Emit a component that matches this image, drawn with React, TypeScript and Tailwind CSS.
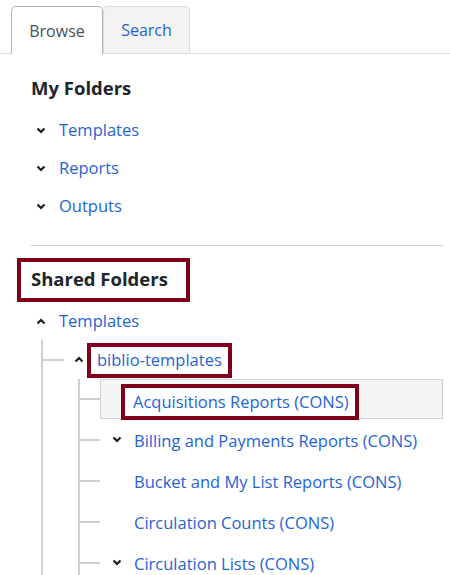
import React from "react";

const font = { fontFamily: '"Open Sans", "Noto Sans", sans-serif' };

function ChevronDown() {
  return (
    <svg width="10" height="7" viewBox="0 0 10 7" className="shrink-0">
      <polyline points="1.5,1.5 5,5 8.5,1.5" fill="none" stroke="#1a1a1a" strokeWidth="2.2" />
    </svg>
  );
}

function ChevronUp() {
  return (
    <svg width="10" height="7" viewBox="0 0 10 7" className="shrink-0">
      <polyline points="1.5,5.5 5,2 8.5,5.5" fill="none" stroke="#1a1a1a" strokeWidth="2.2" />
    </svg>
  );
}

function Connector({ w }: { w: string }) {
  return <div className={`h-[2px] ${w} shrink-0 bg-[#ccd0d6]`} />;
}

export default function App() {
  const myFolders = ["Templates", "Reports", "Outputs"];

  return (
    <div className="w-[450px] h-[575px] overflow-hidden bg-white text-[16.5px]" style={font}>
      {/* tabs */}
      <div className="flex items-end pt-[6px] pl-[11px] h-[54px] border-b border-[#dcdcdc] text-[16px]">
        <div className="w-[92px] h-[48px] -mb-px bg-white border border-b-0 border-[#b4b4b4] rounded-t-[5px] flex items-center justify-center text-[#495057]">
          Browse
        </div>
        <div className="w-[87px] h-[47px] bg-[#f3f3f3] border border-b-0 border-[#dcdcdc] rounded-t-[5px] flex items-center justify-center text-[#1f63d6]">
          Search
        </div>
      </div>

      <div className="pl-[31px] pr-[7px]">
        <h2 className="mt-[20px] text-[18.5px] leading-[27px] font-bold text-[#212529]">My Folders</h2>
        <ul className="mt-[10px]">
          {myFolders.map((f) => (
            <li key={f} className="h-[38px] flex items-center">
              <span className="w-[28px] pl-[5px] flex items-center">
                <ChevronDown />
              </span>
              <span className="text-[#1f63d6]">{f}</span>
            </li>
          ))}
        </ul>
        <hr className="mt-[20px] border-t border-[#cccccc]" />

        {/* Shared Folders */}
        <div className="mt-[12px] -ml-[14px] w-[173px] h-[44px] border-4 border-[#80001a] pl-[10px] pb-[3px] flex items-center">
          <h2 className="text-[18.5px] leading-[27px] font-bold text-[#212529]">Shared Folders</h2>
        </div>

        <div className="h-[38px] flex items-center">
          <span className="w-[28px] pl-[5px] flex items-center">
            <ChevronUp />
          </span>
          <span className="text-[#1f63d6]">Templates</span>
        </div>

        <div className="ml-[10px] border-l-2 border-[#ccd0d6]">
          <div className="h-[39px] flex items-center">
            <Connector w="w-[21px]" />
            <span className="ml-[10px] flex items-center">
              <ChevronUp />
            </span>
            <span className="ml-[3px] h-[35px] mt-[2px] border-4 border-[#80001a] px-[6px] flex items-center text-[#1f63d6]">
              biblio-templates
            </span>
          </div>

          <div className="ml-[35px] border-l-2 border-[#ccd0d6]">
            <div className="h-[40px] flex items-center">
              <Connector w="w-[20px]" />
              <div className="relative flex-1 h-[40px] bg-[#f5f5f5] border border-[#d0d3d9] flex items-center">
                <span className="ml-[20px] mt-[6px] h-[36px] border-4 border-[#80001a] pl-[8px] pr-[6px] flex items-center text-[#1f63d6] bg-white">
                  Acquisitions Reports (CONS)
                </span>
              </div>
            </div>
            {[
              { t: "Billing and Payments Reports (CONS)", c: true },
              { t: "Bucket and My List Reports (CONS)", c: false },
              { t: "Circulation Counts (CONS)", c: false },
              { t: "Circulation Lists (CONS)", c: true },
            ].map((r) => (
              <div key={r.t} className="h-[41px] flex items-center">
                <Connector w="w-[20px]" />
                <span className="w-[34px] pl-[12px] flex items-center">{r.c && <ChevronDown />}</span>
                <span className="text-[#1f63d6] mt-[3px]">{r.t}</span>
              </div>
            ))}
          </div>
        </div>
      </div>
    </div>
  );
}
